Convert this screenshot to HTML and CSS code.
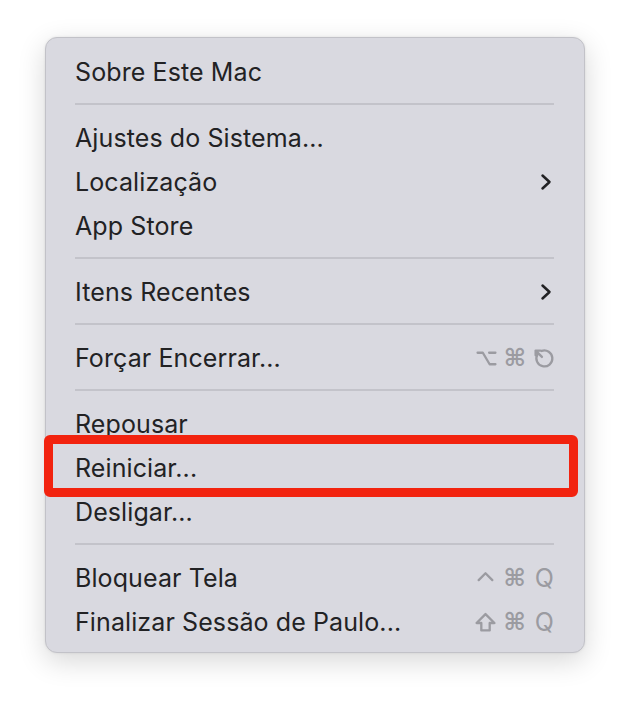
FILE: index.html
```html
<!DOCTYPE html>
<html lang="pt">

<head>
    <meta charset="UTF-8">
    <meta name="viewport" content="width=device-width, initial-scale=1.0">
    <title>Menu Apple</title>
    <link rel="stylesheet" href="styles.css">
</head>

<body>
    <div class="menu">
        <div class="item">Sobre Este Mac</div>
        <div class="sep"></div>
        <div class="item">Ajustes do Sistema...</div>
        <div class="item">Localização
            <svg class="chev" viewBox="0 0 12 18"><path d="M2.5 2.5 L9.5 9 L2.5 15.5" /></svg>
        </div>
        <div class="item">App Store</div>
        <div class="sep"></div>
        <div class="item">Itens Recentes
            <svg class="chev" viewBox="0 0 12 18"><path d="M2.5 2.5 L9.5 9 L2.5 15.5" /></svg>
        </div>
        <div class="sep"></div>
        <div class="item">Forçar Encerrar...
            <span class="keys">
                <svg class="key-icon" viewBox="0 0 20 20"><path d="M1.5 4.5 H6.5 L13 15.5 H18.5 M12.5 4.5 H18.5" /></svg>
                <span>⌘</span>
                <svg class="key-icon" viewBox="0 0 20 20"><path d="M4.2 6.2 A7.6 7.6 0 1 0 8.2 2.8" /><path d="M2.5 2.5 L8.5 8.5 M2.5 2.5 H7 M2.5 2.5 V7" /></svg>
            </span>
        </div>
        <div class="sep"></div>
        <div class="item">Repousar</div>
        <div class="item">Reiniciar...</div>
        <div class="item">Desligar...</div>
        <div class="sep"></div>
        <div class="item">Bloquear Tela
            <span class="keys">
                <svg class="key-icon" viewBox="0 0 20 20"><path d="M3.5 11.5 L10 5 L16.5 11.5" /></svg>
                <span>⌘</span><span class="q">Q</span>
            </span>
        </div>
        <div class="item">Finalizar Sessão de Paulo...
            <span class="keys">
                <svg class="key-icon" viewBox="0 0 20 20"><path d="M10 2 L18.5 10.5 H14 V17.5 H6 V10.5 H1.5 Z" /></svg>
                <span>⌘</span><span class="q">Q</span>
            </span>
        </div>

        <div class="highlight"></div>
    </div>
</body>

</html>
```

FILE: styles.css
```css
* {
    margin: 0;
    padding: 0;
    box-sizing: border-box;
}

body {
    min-height: 100vh;
    background: #fff;
    font-family: Inter, "Noto Sans", sans-serif;
    overflow: hidden;
}

.menu {
    position: relative;
    width: 540px;
    height: 616px;
    margin: 37px 0 0 45px;
    padding: 12px 30px 9px 29px;
    background: #d9d9e0;
    border: 1px solid #c2c2c8;
    border-radius: 12px;
    box-shadow: 0 8px 28px rgba(0, 0, 0, .16), 0 0 3px rgba(0, 0, 0, .08);
}

.item {
    display: flex;
    align-items: center;
    justify-content: space-between;
    height: 44px;
    font-size: 25px;
    color: #222224;
    letter-spacing: .1px;
}

.sep {
    height: 2px;
    margin: 9px 0 11px 0;
    background: #c3c3ca;
}

.chev {
    width: 12px;
    height: 18px;
    margin-right: 2px;
    fill: none;
    stroke: #222224;
    stroke-width: 2.5;
    stroke-linecap: round;
    stroke-linejoin: round;
}

.keys {
    display: flex;
    align-items: center;
    gap: 7px;
    color: #9b9ba1;
    font-family: "DejaVu Sans", sans-serif;
    font-size: 24px;
    font-weight: bold;
}

.keys .q {
    font-family: Inter, sans-serif;
    font-weight: normal;
    font-size: 25px;
    margin-left: 2px;
}

.key-icon {
    width: 21px;
    height: 21px;
    fill: none;
    stroke: #9b9ba1;
    stroke-width: 2.2;
    stroke-linecap: round;
    stroke-linejoin: round;
}

.highlight {
    position: absolute;
    left: -2px;
    top: 397px;
    width: 534px;
    height: 62px;
    border: 9px solid #f2230f;
    border-radius: 6px;
}
```
